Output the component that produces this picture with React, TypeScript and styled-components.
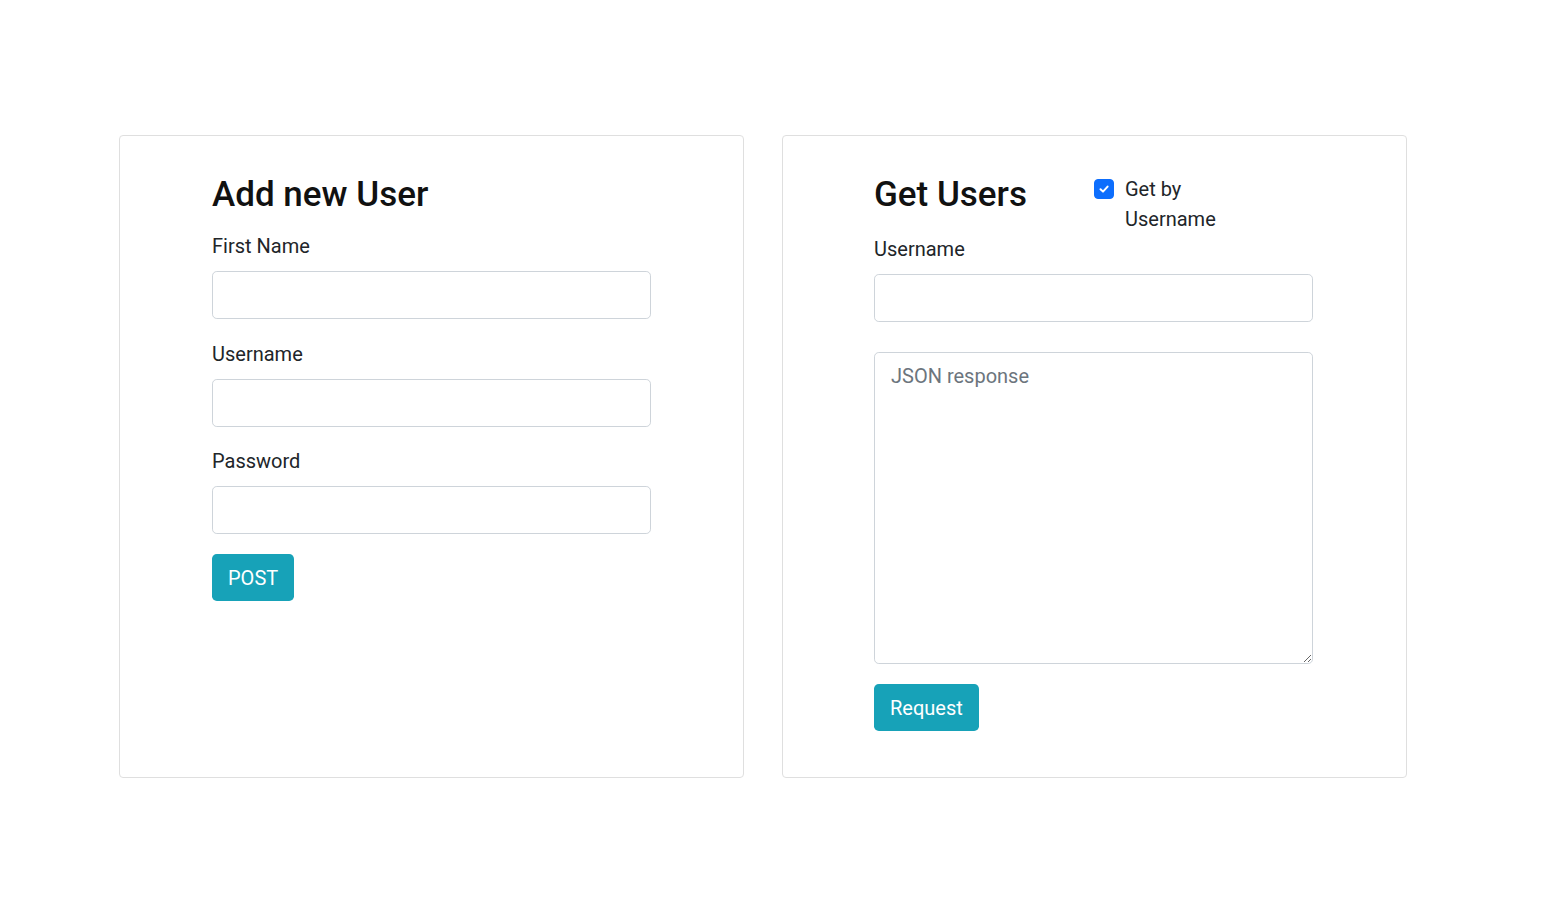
import { useState } from "react";
import styled, { createGlobalStyle } from "styled-components";

const GlobalStyle = createGlobalStyle`
  * {
    box-sizing: border-box;
  }
  body {
    margin: 0;
    background: #fff;
    font-family: Roboto, "Liberation Sans", sans-serif;
    color: #212529;
  }
`;

const Page = styled.div`
  display: flex;
  align-items: stretch;
  gap: 38px;
  padding: 135px 0 0 119px;
`;

const Card = styled.div<{ $left?: number }>`
  width: 625px;
  border: 1px solid #dfdfdf;
  border-radius: 4px;
  padding: 38px ${(p) => 184 - (p.$left ?? 92)}px 46px ${(p) => p.$left ?? 92}px;
  display: flex;
  flex-direction: column;
`;

const Heading = styled.h2`
  margin: 0;
  font-size: 35px;
  font-weight: 500;
  line-height: 42px;
  color: #111;
`;

const HeaderRow = styled.div`
  display: grid;
  grid-template-columns: 220px 1fr;
  align-items: start;
`;

const Label = styled.label<{ $top?: number }>`
  display: block;
  font-size: 20px;
  line-height: 30px;
  margin: ${(p) => p.$top ?? 0}px 0 10px;
`;

const Field = styled.input`
  display: block;
  width: 100%;
  height: 48px;
  padding: 8px 16px;
  font-family: inherit;
  font-size: 20px;
  line-height: 30px;
  border: 1px solid #ced4da;
  border-radius: 4.8px;
  color: #495057;
  outline: none;
`;

const Response = styled.textarea`
  display: block;
  width: 100%;
  height: 312px;
  margin-top: 30px;
  padding: 8px 16px;
  font-family: inherit;
  font-size: 20px;
  line-height: 30px;
  border: 1px solid #ced4da;
  border-radius: 4.8px;
  color: #495057;
  outline: none;
  resize: vertical;
  &::placeholder {
    color: #6c757d;
  }
`;

const Button = styled.button`
  align-self: flex-start;
  margin-top: 20px;
  height: 47px;
  padding: 0 16px;
  font-family: inherit;
  font-size: 20px;
  line-height: 30px;
  color: #fff;
  background: #17a2b8;
  border: none;
  border-radius: 4.8px;
  cursor: pointer;
`;

const Check = styled.label`
  display: flex;
  align-items: flex-start;
  gap: 11px;
  font-size: 20px;
  line-height: 30px;
  cursor: pointer;
  user-select: none;
`;

const Box = styled.span<{ $on: boolean }>`
  flex: none;
  width: 20px;
  height: 20px;
  margin-top: 5px;
  border-radius: 4px;
  background: ${(p) => (p.$on ? "#0d6efd" : "#fff")};
  border: 1px solid ${(p) => (p.$on ? "#0d6efd" : "#adb5bd")};
  display: flex;
  align-items: center;
  justify-content: center;
`;

const CheckText = styled.span`
  width: 100px;
`;

export default function App() {
  const [byName, setByName] = useState(true);

  return (
    <>
      <GlobalStyle />
      <Page>
        <Card>
          <Heading>Add new User</Heading>
          <Label $top={15}>First Name</Label>
          <Field type="text" />
          <Label $top={20}>Username</Label>
          <Field type="text" />
          <Label $top={19}>Password</Label>
          <Field type="password" />
          <Button>POST</Button>
        </Card>

        <Card $left={91}>
          <HeaderRow>
            <Heading>Get Users</Heading>
            <Check onClick={() => setByName((v) => !v)}>
              <Box $on={byName}>
                {byName && (
                  <svg width="12" height="12" viewBox="0 0 12 12">
                    <path
                      d="M2.5 6.2 L5 8.6 L9.6 3.6"
                      fill="none"
                      stroke="#fff"
                      strokeWidth="2"
                      strokeLinecap="round"
                      strokeLinejoin="round"
                    />
                  </svg>
                )}
              </Box>
              <CheckText>Get by Username</CheckText>
            </Check>
          </HeaderRow>
          <Label>Username</Label>
          <Field type="text" />
          <Response placeholder="JSON response" />
          <Button>Request</Button>
        </Card>
      </Page>
    </>
  );
}
